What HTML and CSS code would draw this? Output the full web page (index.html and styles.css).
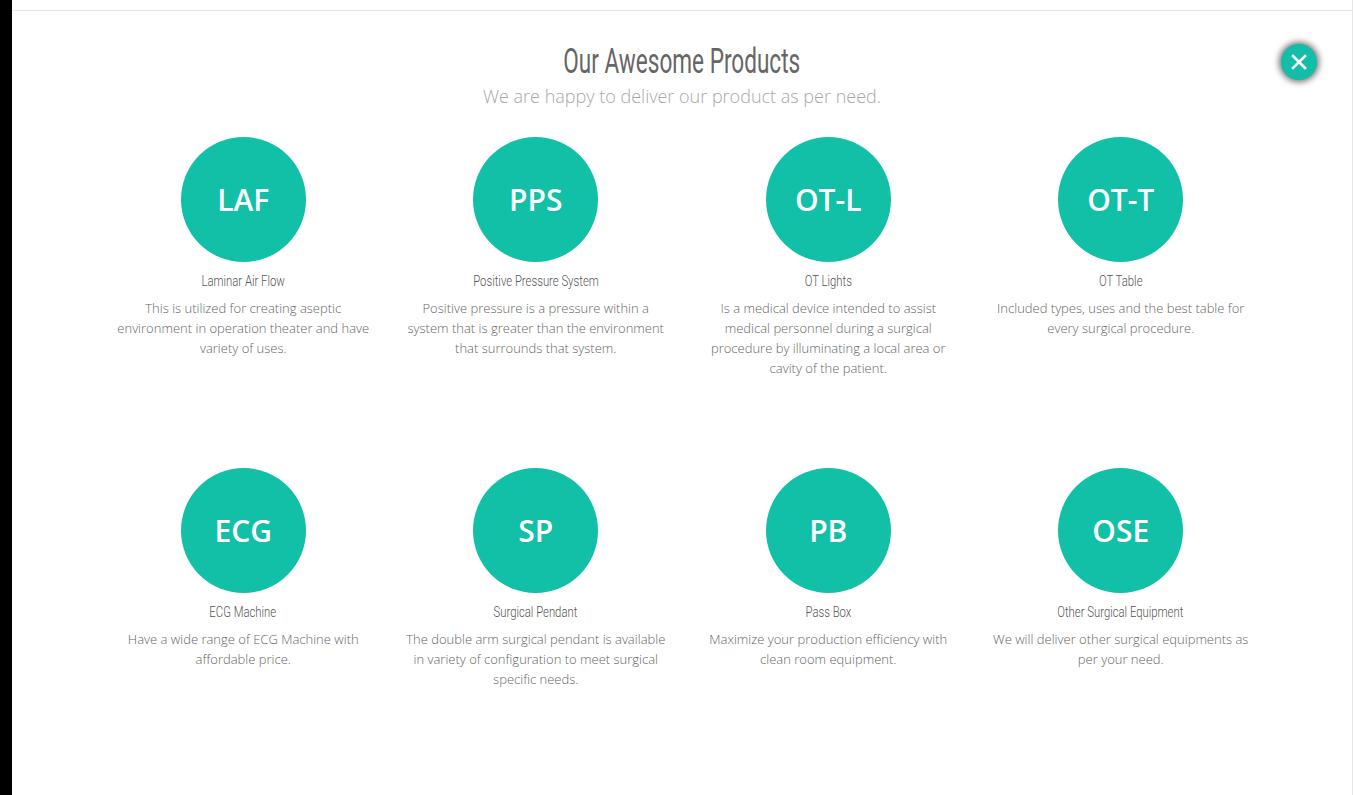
FILE: index.html
```html
<!DOCTYPE html>
<html>
<head>
<meta charset="utf-8">
<link rel="stylesheet" href="styles.css">
</head>
<body>
<div class="modal">
  <div class="modal-top"></div>
  <button class="close" aria-label="Close">
    <svg width="16" height="16" viewBox="0 0 16 16"><path d="M2 2 L14 14 M14 2 L2 14" stroke="#fff" stroke-width="2.6" stroke-linecap="square"/></svg>
  </button>
  <div class="container">
    <h2 class="title"><span>Our Awesome Products</span></h2>
    <p class="subtitle">We are happy to deliver our product as per need.</p>
    <div class="grid">
      <div class="item">
        <div class="circle">LAF</div>
        <h4 class="name"><span>Laminar Air Flow</span></h4>
        <p class="desc">This is utilized for creating aseptic environment in operation theater and have variety of uses.</p>
      </div>
      <div class="item">
        <div class="circle">PPS</div>
        <h4 class="name"><span>Positive Pressure System</span></h4>
        <p class="desc">Positive pressure is a pressure within a system that is greater than the environment that surrounds that system.</p>
      </div>
      <div class="item">
        <div class="circle">OT-L</div>
        <h4 class="name"><span>OT Lights</span></h4>
        <p class="desc">Is a medical device intended to assist medical personnel during a surgical procedure by illuminating a local area or cavity of the patient.</p>
      </div>
      <div class="item">
        <div class="circle">OT-T</div>
        <h4 class="name"><span>OT Table</span></h4>
        <p class="desc">Included types, uses and the best table for every surgical procedure.</p>
      </div>
      <div class="item">
        <div class="circle">ECG</div>
        <h4 class="name"><span>ECG Machine</span></h4>
        <p class="desc">Have a wide range of ECG Machine with affordable price.</p>
      </div>
      <div class="item">
        <div class="circle">SP</div>
        <h4 class="name"><span>Surgical Pendant</span></h4>
        <p class="desc">The double arm surgical pendant is available in variety of configuration to meet surgical specific needs.</p>
      </div>
      <div class="item">
        <div class="circle">PB</div>
        <h4 class="name"><span>Pass Box</span></h4>
        <p class="desc">Maximize your production efficiency with clean room equipment.</p>
      </div>
      <div class="item">
        <div class="circle">OSE</div>
        <h4 class="name"><span>Other Surgical Equipment</span></h4>
        <p class="desc">We will deliver other surgical equipments as per your need.</p>
      </div>
    </div>
  </div>
</div>
</body>
</html>
```

FILE: styles.css
```css
html, body {
  margin: 0;
  padding: 0;
  height: 100%;
  background: #000;
  overflow: hidden;
}
.modal {
  position: relative;
  margin-left: 12px;
  width: 1340px;
  height: 795px;
  background: #fff;
  border-right: 1px solid #e6e6e6;
}
.modal-top {
  height: 10px;
  border-bottom: 1px solid #e6e6e6;
}
.close {
  position: absolute;
  top: 44px;
  left: 1269px;
  width: 36px;
  height: 36px;
  border-radius: 50%;
  border: none;
  padding: 0;
  background: #12bea8;
  box-shadow: 0 0 6px 2px rgba(0,0,0,0.55);
  display: flex;
  align-items: center;
  justify-content: center;
}
.container {
  width: 1170px;
  margin: 0 auto;
}
.title {
  margin: 33px 0 0;
  text-align: center;
  font-family: Roboto, "Liberation Sans", sans-serif;
  font-weight: 400;
  font-size: 35px;
  line-height: 36px;
  color: #666;
}
.title span,
.name span {
  display: inline-block;
  white-space: nowrap;
}
.title span {
  transform: scaleX(0.645);
}
.subtitle {
  margin: 2px 0 0;
  text-align: center;
  font-family: "Open Sans", sans-serif;
  font-weight: 300;
  font-size: 18px;
  line-height: 28px;
  color: #a8a8a8;
}
.grid {
  margin-top: 27px;
  display: grid;
  grid-template-columns: repeat(4, 1fr);
  grid-auto-rows: 331px;
}
.item {
  padding: 0 15px;
  text-align: center;
}
.circle {
  width: 125px;
  height: 125px;
  margin: 0 auto;
  border-radius: 50%;
  background: #12bfa7;
  color: #fff;
  font-family: "Open Sans", sans-serif;
  font-weight: 600;
  font-size: 30px;
  display: flex;
  align-items: center;
  justify-content: center;
}
.name {
  margin: 9px 0 0;
  font-family: Roboto, "Liberation Sans", sans-serif;
  font-weight: 300;
  font-size: 15.5px;
  line-height: 20px;
  color: #555;
}
.name span {
  transform: scaleX(0.73);
}
.desc {
  margin: 7px 0 0;
  font-family: "Open Sans", sans-serif;
  font-weight: 300;
  font-size: 13px;
  line-height: 20px;
  color: #666;
}
```
